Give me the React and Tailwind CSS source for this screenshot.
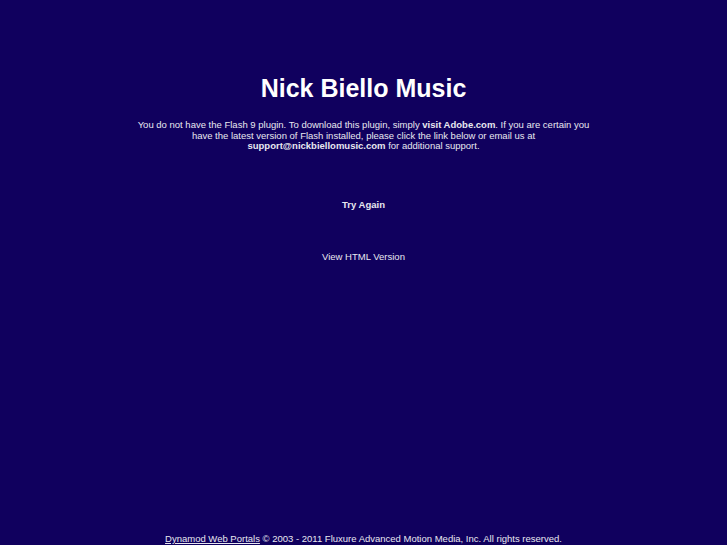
export default function App() {
  return (
    <div
      className="min-h-screen flex flex-col items-center bg-[#10005e] text-white"
      style={{ fontFamily: '"Liberation Sans", Arial, sans-serif' }}
    >
      <h1 className="mt-[73px] text-[25px] leading-[30px] font-bold">Nick Biello Music</h1>
      <p className="mt-[17px] w-[462px] text-center text-[9.5px] leading-[10.5px] text-[#e8e8f0]">
        You do not have the Flash 9 plugin. To download this plugin, simply{" "}
        <b>visit Adobe.com</b>. If you are certain you have the latest version of Flash
        installed, please click the link below or email us at{" "}
        <b>support@nickbiellomusic.com</b> for additional support.
      </p>
      <a className="mt-[47px] text-[9.5px] leading-[12px] font-bold text-[#e8e8f0]">Try Again</a>
      <a className="mt-[40px] text-[9.5px] leading-[12px] text-[#e8e8f0]">View HTML Version</a>
      <div className="mt-auto mb-0 text-[9.5px] leading-[12px] text-[#e8e8f0]">
        <a className="underline">Dynamod Web Portals</a> © 2003 - 2011 Fluxure Advanced Motion
        Media, Inc. All rights reserved.
      </div>
    </div>
  );
}
